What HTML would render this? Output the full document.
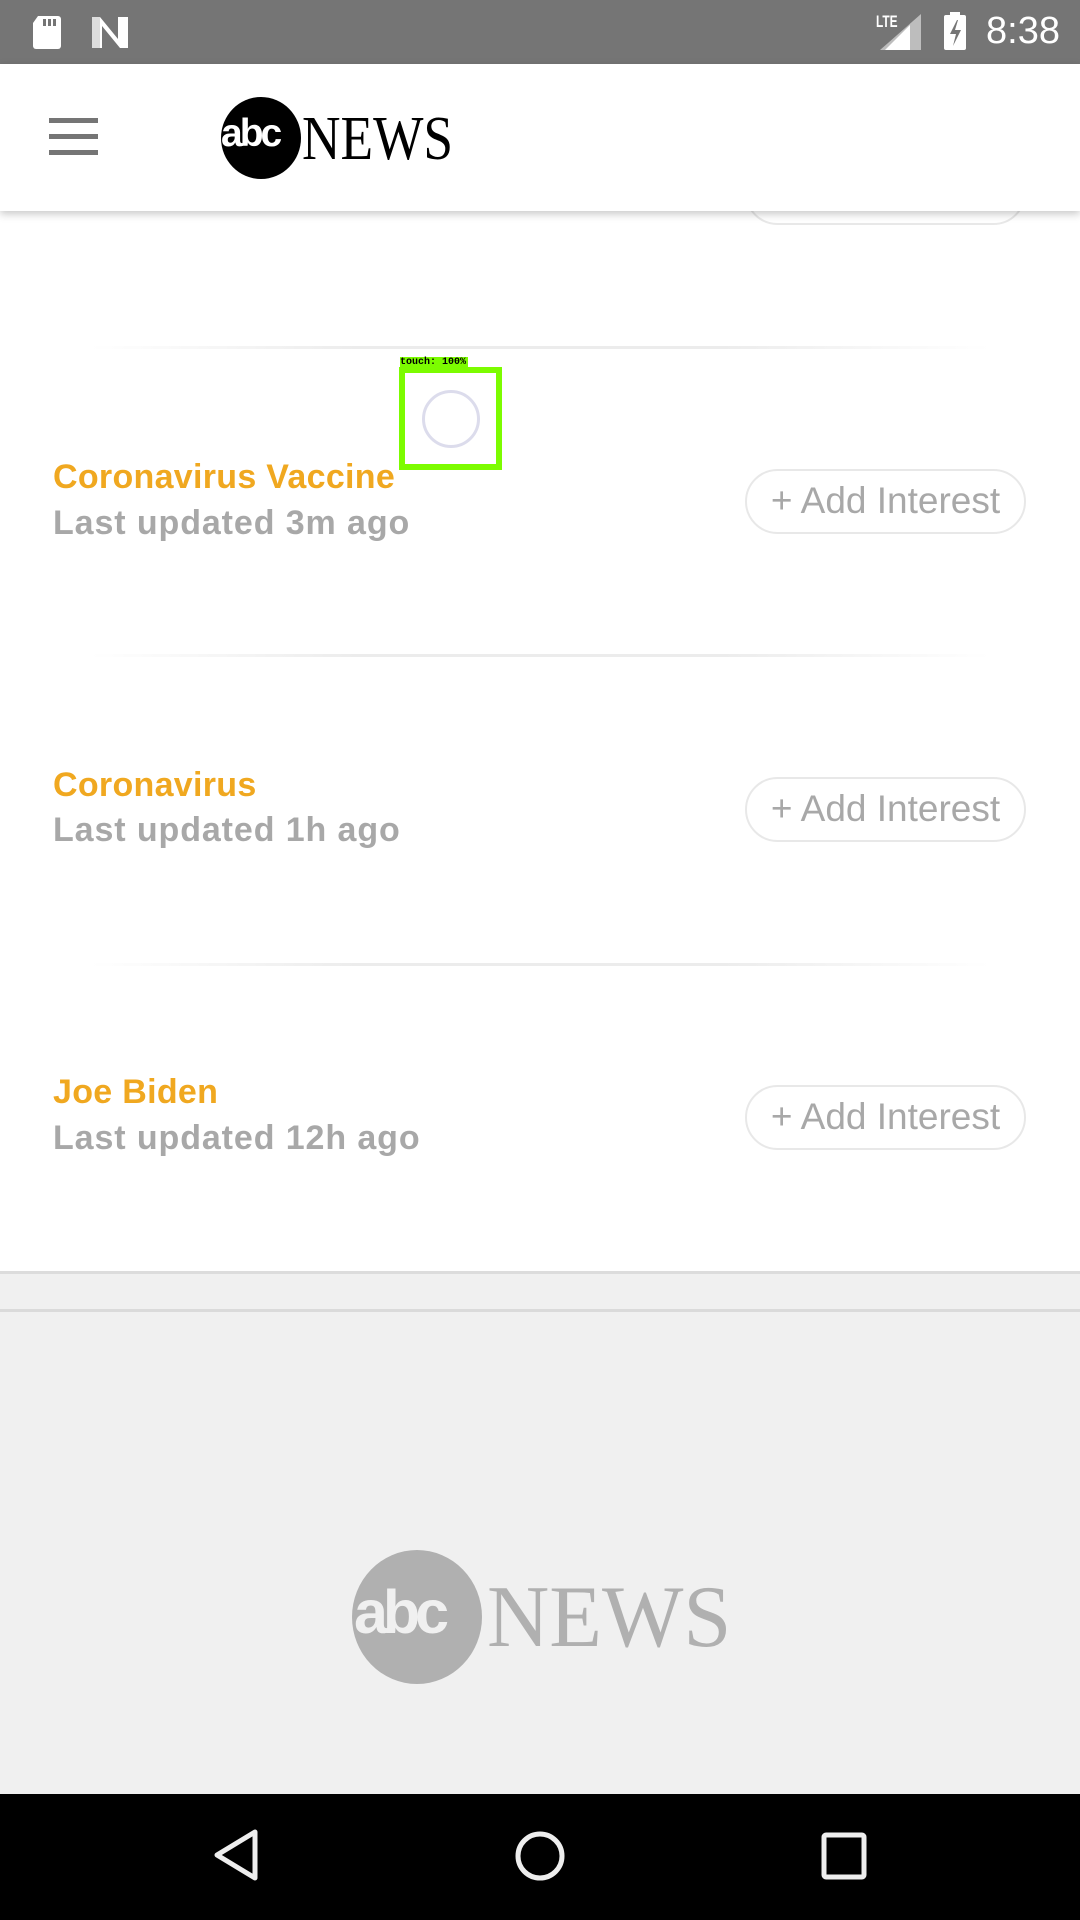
<!DOCTYPE html>
<html><head><meta charset="utf-8"><style>
*{margin:0;padding:0;box-sizing:border-box}
body{width:1080px;height:1920px;position:relative;overflow:hidden;background:#fff;font-family:"Liberation Sans",sans-serif}
.abs{position:absolute}
.status{left:0;top:0;width:1080px;height:64px;background:#757575}
.header{left:0;top:64px;width:1080px;height:147px;background:#fff;box-shadow:0 3px 8px rgba(0,0,0,.22);z-index:2}
.div{left:90px;width:900px;height:3px;background:linear-gradient(90deg,rgba(230,230,230,0),#ececec 30%,#ececec 70%,rgba(230,230,230,0))}
.title{left:53px;font-size:34px;font-weight:bold;color:#f0a820;white-space:nowrap;letter-spacing:.3px}
.sub{left:53px;font-size:34px;font-weight:bold;color:#a8a8a8;white-space:nowrap;letter-spacing:.9px}
.btn{left:745px;width:281px;height:65px;border:2px solid #e8e8e8;border-radius:33px;font-size:37px;color:#a8a8a8;text-align:center;line-height:60px;white-space:nowrap}
.news{font-family:"Liberation Serif",serif;white-space:nowrap;transform-origin:left top}
</style></head><body>
<div class="abs status">
 <svg class="abs" style="left:30px;top:14px" width="36" height="36" viewBox="0 0 36 36"><path d="M8 2h20a3 3 0 0 1 3 3v27a3 3 0 0 1-3 3H6a3 3 0 0 1-3-3V9z" fill="#fff"/><rect x="13" y="5" width="3" height="7" fill="#757575"/><rect x="18" y="5" width="3" height="7" fill="#757575"/><rect x="23" y="5" width="3" height="7" fill="#757575"/></svg>
 <svg class="abs" style="left:90px;top:15px" width="42" height="34" viewBox="0 0 42 34"><path d="M2 2h8l18 22V2h10v31h-8L12 11v22H2z" fill="#fff"/><path d="M2 2h8v31H2z" fill="#ddd"/></svg>
 <div class="abs" style="left:876px;top:12px;color:#fff;font-size:17px;font-weight:bold;transform:scaleX(.7);transform-origin:left">LTE</div>
 <svg class="abs" style="left:880px;top:14px" width="42" height="36" viewBox="0 0 42 36"><path d="M41 0v36H0z" fill="#bdbdbd"/><path d="M30 11v25H5z" fill="#fff"/></svg>
 <svg class="abs" style="left:943px;top:12px" width="24" height="38" viewBox="0 0 24 38"><rect x="7" y="0" width="10" height="4" fill="#fff"/><rect x="1" y="3" width="22" height="35" rx="2" fill="#fff"/><path d="M14 8l-7 14h6l-3 12 8-16h-6l3-10z" fill="#757575"/></svg>
 <div class="abs" style="left:986px;top:10px;color:#fff;font-size:38px">8:38</div>
</div>
<div class="abs header">
 <div class="abs" style="left:49px;top:54px;width:49px;height:5px;background:#757575"></div>
 <div class="abs" style="left:49px;top:70px;width:49px;height:5px;background:#757575"></div>
 <div class="abs" style="left:49px;top:86px;width:49px;height:5px;background:#757575"></div>
 <div class="abs" style="left:221px;top:33px;width:80px;height:82px;border-radius:50%;background:#000"></div>
 <div class="abs" style="left:221px;top:48px;color:#fff;font-size:39px;font-weight:bold;letter-spacing:-3px">abc</div>
 <div class="abs news" style="left:302px;top:40px;font-size:62px;color:#000;transform:scaleX(.86)">NEWS</div>
</div>
<div class="abs btn" style="top:160px;"></div>
<div class="abs div" style="top:346px"></div>

<div class="abs title" style="top:458px">Coronavirus Vaccine</div>
<div class="abs sub" style="top:504px">Last updated 3m ago</div>
<div class="abs btn" style="top:469px">+ Add Interest</div>
<div class="abs div" style="top:654px"></div>

<div class="abs title" style="top:766px">Coronavirus</div>
<div class="abs sub" style="top:811px">Last updated 1h ago</div>
<div class="abs btn" style="top:777px">+ Add Interest</div>
<div class="abs div" style="top:963px"></div>

<div class="abs title" style="top:1073px">Joe Biden</div>
<div class="abs sub" style="top:1119px">Last updated 12h ago</div>
<div class="abs btn" style="top:1085px">+ Add Interest</div>

<div class="abs" style="left:0;top:1271px;width:1080px;height:523px;background:#f0f0f0;border-top:3px solid #dcdcdc"></div>
<div class="abs" style="left:0;top:1309px;width:1080px;height:3px;background:#dadada"></div>
<div class="abs" style="left:352px;top:1550px;width:130px;height:134px;border-radius:50%;background:#b0b0b0"></div>
<div class="abs" style="left:354px;top:1577px;color:#f0f0f0;font-size:61px;font-weight:bold;letter-spacing:-5px">abc</div>
<div class="abs news" style="left:487px;top:1567px;font-size:88px;color:#b0b0b0;transform:scaleX(.98)">NEWS</div>

<div class="abs" style="left:399px;top:367px;width:103px;height:103px;border:6px solid #7cfc00"></div>
<div class="abs" style="left:400px;top:357px;width:68px;height:11px;background:#7cfc00;font-family:'Liberation Mono',monospace;font-size:10px;font-weight:bold;line-height:11px;color:#000">touch: 100%</div>
<div class="abs" style="left:422px;top:390px;width:58px;height:58px;border-radius:50%;border:3px solid #dcdcec"></div>

<div class="abs" style="left:0;top:1794px;width:1080px;height:126px;background:#000">
 <svg class="abs" style="left:0;top:0" width="1080" height="126" viewBox="0 0 1080 126"><path d="M255 38L217 61L255 84Z" fill="none" stroke="#eee" stroke-width="5" stroke-linejoin="round"/><circle cx="540" cy="62" r="22" fill="none" stroke="#eee" stroke-width="5"/><rect x="824" y="41" width="40" height="42" rx="2" fill="none" stroke="#eee" stroke-width="5"/></svg>
</div>
</body></html>
